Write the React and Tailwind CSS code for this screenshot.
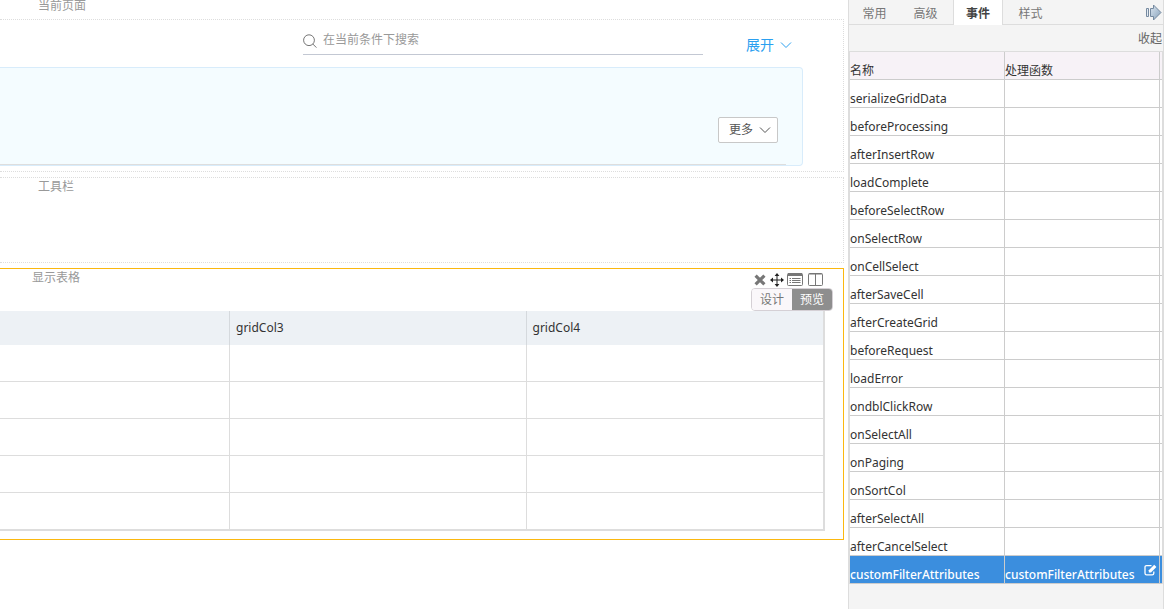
import React, { useState } from 'react'

const tabs = ['常用', '高级', '事件', '样式']

const events = [
  'serializeGridData',
  'beforeProcessing',
  'afterInsertRow',
  'loadComplete',
  'beforeSelectRow',
  'onSelectRow',
  'onCellSelect',
  'afterSaveCell',
  'afterCreateGrid',
  'beforeRequest',
  'loadError',
  'ondblClickRow',
  'onSelectAll',
  'onPaging',
  'onSortCol',
  'afterSelectAll',
  'afterCancelSelect',
  'customFilterAttributes',
]

const ChevronDown = () => (
  <svg width="12" height="12" viewBox="0 0 12 12" fill="none" stroke="currentColor" strokeWidth="1">
    <path d="M1 3.5 6 8.5 11 3.5" />
  </svg>
)

const SearchIcon = () => (
  <svg width="14" height="14" viewBox="0 0 14 14" fill="none" stroke="#666" strokeWidth="0.9">
    <circle cx="6" cy="6.2" r="5.4" />
    <path d="M9.8 10 13.4 13.6" />
  </svg>
)

const CloseIcon = () => (
  <svg width="12" height="12" viewBox="0 0 12 12" fill="none" stroke="#777" strokeWidth="3.2">
    <path d="M1.6 1.6 10.4 10.4M10.4 1.6 1.6 10.4" />
  </svg>
)

const MoveIcon = () => (
  <svg width="14" height="14" viewBox="0 0 14 14" fill="#222">
    <path d="M7 0 9.4 3H7.5V6.5H11V4.6L14 7 11 9.4V7.5H7.5V11H9.4L7 14 4.6 11H6.5V7.5H3V9.4L0 7 3 4.6V6.5H6.5V3H4.6Z" />
  </svg>
)

const ListIcon = () => (
  <svg width="16" height="13" viewBox="0 0 16 13" fill="none" stroke="#777">
    <rect x="0.5" y="0.5" width="15" height="12" rx="1" />
    <path d="M1 1.5H15" strokeWidth="3" />
    <path d="M2.5 5.5H4M2.5 7.5H4M2.5 9.5H4M5 5.5H13.5M5 7.5H13.5M5 9.5H13.5" />
  </svg>
)

const ColumnsIcon = () => (
  <svg width="15" height="13" viewBox="0 0 15 13" fill="none" stroke="#777">
    <rect x="0.5" y="0.5" width="14" height="12" rx="1" />
    <path d="M1 1H14M7.5 1V12" />
  </svg>
)

const EditIcon = () => (
  <svg width="13" height="12" viewBox="0 0 13 12" fill="none" stroke="#fff" strokeWidth="1.3">
    <path d="M7.5 1.7H2.6Q1 1.7 1 3.2V9.2Q1 10.8 2.6 10.8H8.2Q9.8 10.8 9.8 9.2V7.6" />
    <path d="M4.8 8.4V6.2L10.2.8 12.4 3 7 8.4Z" fill="#fff" stroke="none" />
  </svg>
)

const DockIcon = () => (
  <svg width="17" height="17" viewBox="0 0 17 17" stroke="#75899f" strokeWidth="1">
    <defs>
      <linearGradient id="dock" x1="0" y1="0" x2="1" y2="1">
        <stop offset="0" stopColor="#dbe6f0" />
        <stop offset="1" stopColor="#86a0ba" />
      </linearGradient>
    </defs>
    <path d="M1.5 4.5H3.5V12.5H1.5Z" fill="#e3eaf2" />
    <path d="M5.5 4.5H8.5V1L16 8.5 8.5 16V12.5H5.5Z" fill="url(#dock)" />
  </svg>
)

const SearchArea = () => (
  <section className="border border-l-0 border-dotted border-[#ddd] h-[153px]">
    <div className="flex h-[47px] items-start">
      <label className="ml-[303px] mt-2 flex h-[27px] w-[400px] items-center border-b border-[#c3c8d3]">
        <SearchIcon />
        <input
          aria-label="搜索"
          placeholder="在当前条件下搜索"
          className="ml-[6px] mb-1 h-5 min-w-0 flex-1 bg-transparent outline-none placeholder:text-[#999]"
        />
      </label>
      <button className="ml-[43px] mt-[15px] flex items-center gap-[6px] text-sm leading-5 text-[#2ba0f0]">
        展开 <ChevronDown />
      </button>
    </div>
    <div className="mr-10 flex h-[99px] flex-col rounded-r-sm border border-l-0 border-[#d8ecfb] bg-[#f4fcff]">
      <div className="mr-4 flex flex-1 items-end justify-end border-b border-[#dedede] pb-[21px] pr-2">
        <button className="flex h-[26px] w-[60px] items-center justify-end gap-[6px] rounded-xs border border-[#c8c8c8] bg-white pr-[6px] text-[#555]">
          更多 <ChevronDown />
        </button>
      </div>
    </div>
  </section>
)

const GridPreview = () => (
  <section className="mt-[5px] border border-l-0 border-[#fbb80f] pb-2">
    <div className="flex h-[42px] justify-between pr-[10px]">
      <div className="pl-8 leading-[18px] text-[#999]">显示表格</div>
      <div className="flex flex-col items-end">
        <div className="mr-[10px] flex h-[19px] items-center gap-[3px] pt-[2px]">
          <button aria-label="删除" className="mr-px"><CloseIcon /></button>
          <button aria-label="移动"><MoveIcon /></button>
          <button aria-label="列表" className="mr-[2px]"><ListIcon /></button>
          <button aria-label="分栏"><ColumnsIcon /></button>
        </div>
        <div className="flex h-[23px] w-[82px] overflow-hidden rounded border border-[#d5d0d5]">
          <button className="flex-1 bg-[#faf7fa] text-[#777]">设计</button>
          <button className="flex-1 bg-[#8e8e8e] text-white">预览</button>
        </div>
      </div>
    </div>
    <div className="mr-[18px] border-b-2 border-r-2 border-[#ddd]">
      <table className="w-full table-fixed border-separate border-spacing-0 text-left text-[#333]">
        <thead>
          <tr className="h-[34px] bg-[#edf1f5]">
            <th className="w-[230px] border-r border-[#d5d9dd]" aria-label="gridCol2"></th>
            <th className="border-r border-[#d5d9dd] p-0 pl-[6px] font-normal">gridCol3</th>
            <th className="p-0 pl-[6px] font-normal">gridCol4</th>
          </tr>
        </thead>
        <tbody>
          {[1, 2, 3, 4].map((row) => (
            <tr key={row} className="h-[37px]">
              <td className="border-b border-r border-[#ddd]"></td>
              <td className="border-b border-r border-[#ddd]"></td>
              <td className="border-b border-[#ddd]"></td>
            </tr>
          ))}
          <tr className="h-9">
            <td className="border-r border-[#ddd]"></td>
            <td className="border-r border-[#ddd]"></td>
            <td></td>
          </tr>
        </tbody>
      </table>
    </div>
  </section>
)

const EventPanel = () => {
  const [activeTab, setActiveTab] = useState('事件')
  const [selected, setSelected] = useState('customFilterAttributes')

  return (
    <aside className="mr-[9px] w-[316px] shrink-0 border-x border-[#ddd] bg-[#f4f4f4]">
      <div className="flex h-[25px] border-b border-[#ddd]">
        {tabs.map((tab) => (
          <button
            key={tab}
            onClick={() => setActiveTab(tab)}
            className={
              tab === activeTab
                ? '-mb-px w-[50px] mx-[2px] border-x border-[#ddd] bg-white pt-[3px] font-bold text-[#444]'
                : 'w-[51px] pt-[3px] text-[#777]'
            }
          >
            {tab}
          </button>
        ))}
        <button aria-label="收起面板" className="ml-auto mr-px shrink-0">
          <DockIcon />
        </button>
      </div>
      <div className="flex h-[26px] justify-end">
        <button className="pr-px pt-[2px] text-[#666]">收起</button>
      </div>
      <div className="border-x border-t border-[#ddd]">
        <table className="w-full table-fixed border-separate border-spacing-0 text-left text-[#333]">
          <thead>
            <tr className="h-7 bg-[#f7f2f7] leading-[17px]">
              <th className="w-[155px] border-b border-r border-[#ccc] p-0 pt-[10px] font-normal">名称</th>
              <th className="border-b border-r border-[#ccc] p-0 pt-[10px] font-normal">处理函数</th>
              <th className="w-[2px] border-b border-[#ccc] p-0" aria-label="滚动"></th>
            </tr>
          </thead>
          <tbody>
            {events.map((name) => {
              const active = name === selected
              return (
                <tr
                  key={name}
                  onClick={() => setSelected(name)}
                  className={active ? 'h-7 bg-[#3b8ede] font-medium leading-[17px] text-white' : 'h-7 bg-white leading-[17px]'}
                >
                  <td className="border-b border-r border-[#ccc] p-0 pt-[10px]">{name}</td>
                  <td className="border-b border-r border-[#ccc] p-0">
                    {active && (
                      <div className="flex items-center justify-between pr-[2px]">
                        <span className="pt-[10px]">{name}</span>
                        <button aria-label="编辑"><EditIcon /></button>
                      </div>
                    )}
                  </td>
                  <td className="border-b border-[#ccc] p-0"></td>
                </tr>
              )
            })}
          </tbody>
        </table>
      </div>
    </aside>
  )
}

const App = () => {
  return (
    <div className="flex min-h-screen bg-white font-['Noto_Sans','Noto_Sans_CJK_SC',sans-serif] text-xs">
      <main className="min-w-0 flex-1 pr-1">
        <div className="h-[19px] pl-[38px] leading-3 text-[#999]">当前页面</div>
        <SearchArea />
        <section className="mt-[5px] h-[86px] border border-l-0 border-dotted border-[#ddd] pl-[38px] leading-[18px] text-[#999]">
          工具栏
        </section>
        <GridPreview />
      </main>
      <EventPanel />
    </div>
  )
}

export default App
